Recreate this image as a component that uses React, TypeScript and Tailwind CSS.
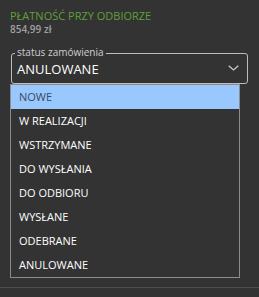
import React from "react";

const items = ["NOWE", "W REALIZACJI", "WSTRZYMANE", "DO WYSŁANIA", "DO ODBIORU", "WYSŁANE", "ODEBRANE", "ANULOWANE"];

export default function App() {
  return (
    <div className="w-[259px] h-[297px] bg-[#333333] overflow-hidden flex flex-col" style={{ fontFamily: "'Open Sans', sans-serif" }}>
      <div className="px-[10px] pt-[9px] flex flex-col">
        <div className="text-[11px] leading-[14px] text-[#5ea03a]">PŁATNOŚĆ PRZY ODBIORZE</div>
        <div className="text-[10px] leading-[12px] font-semibold text-[#a0a0a0]">854,99 zł</div>
      </div>
      <div className="px-[10px] mt-[18px] flex flex-col">
        <div className="relative mx-[1px] border border-[#bdbdbd] rounded-[3px] h-[31px] pl-[5px] pr-[8px] flex items-center justify-between">
          <span className="absolute left-[3px] top-[-8px] bg-[#333333] px-[2px] text-[10px] leading-[13px] text-[#cfcfcf]">status zamówienia</span>
          <span className="text-[13px] leading-[18px] text-white">ANULOWANE</span>
          <svg width="11" height="6" viewBox="0 0 11 6" className="-mt-[1px]">
            <path d="M0.7 0.7 L5.5 5 L10.3 0.7" fill="none" stroke="#c8c8c8" strokeWidth="1.3" />
          </svg>
        </div>
        <div className="border border-[#8c8c8c] w-[230px] flex flex-col">
          {items.map((it, i) => (
            <div key={it} className={`h-[24px] flex items-center pl-[8px] text-[11px] ${i === 0 ? "bg-[#99c8ff] text-[#3a4a5e]" : "text-white"}`}>{it}</div>
          ))}
        </div>
      </div>
      <div className="mt-[9px] h-[1px] bg-[#4e4e4e]" />
    </div>
  );
}
